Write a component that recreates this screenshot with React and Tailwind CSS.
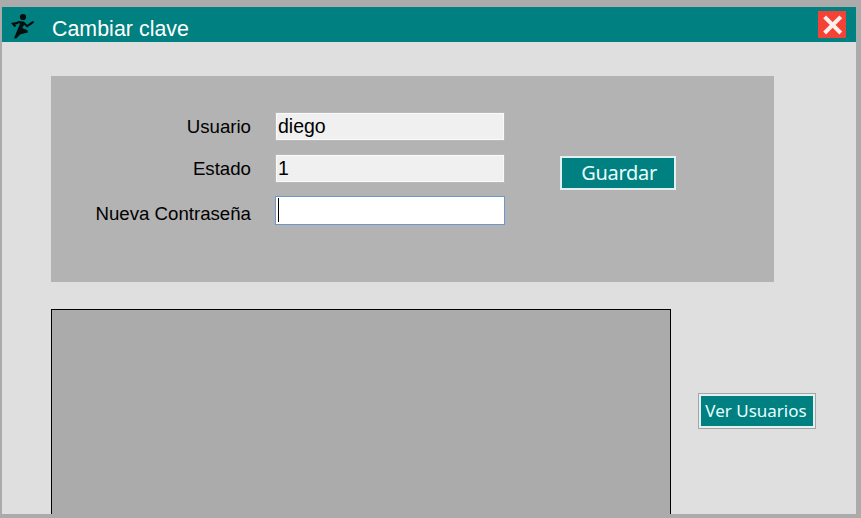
import React from "react";

const inputBase =
  "block w-[230px] px-[2px] text-[19.5px] text-black outline-none rounded-none";

function Runner() {
  return (
    <svg className="block h-[29px] w-[24px]" viewBox="0 0 24 29" fill="none" stroke="#04100f">
      <circle cx="13" cy="7" r="3.1" fill="#04100f" stroke="none" />
      <path d="M8 11.2 L13.8 11.6 L14.8 14 L12.2 18 L17.5 20.2 L17.8 22.6 L10.5 24.2 L6.2 28.5 L4 28.3 L7.2 20.5 L9.8 14 Z" fill="#04100f" stroke="none" />
      <path d="M10.5 12 L7.5 12.2 M8 12.8 L3 13.8 L5.4 16.6" strokeWidth="2.2" />
      <path d="M13.6 12.8 L17.2 16.2 L22.9 12.2" strokeWidth="2.2" strokeLinecap="round" />
    </svg>
  );
}

function TitleBar() {
  return (
    <header className="flex h-[35px] shrink-0 items-center bg-[#008080] pl-[8px] pr-[10px]">
      <Runner />
      <h1 className="ml-[18px] mt-[8px] whitespace-nowrap text-[21.33px] leading-[26px] font-normal tracking-[0.05px] text-white">
        Cambiar clave
      </h1>
      <button aria-label="Cerrar" className="ml-auto flex h-[27px] w-[28px] items-center justify-center bg-[#f44336]">
        <svg className="block h-[27px] w-[28px]" viewBox="0 0 28 27" fill="none" stroke="#fff0ee" strokeWidth="4">
          <path d="M6.6 5.8 L22.8 22 M22.8 5.8 L6.6 22" />
        </svg>
      </button>
    </header>
  );
}

function Field({ label, value, className, labelClass }) {
  return (
    <label className="flex items-start">
      <span className={"w-[200px] shrink-0 text-right text-[18.67px] leading-[22px] whitespace-nowrap " + labelClass}>
        {label}
      </span>
      <span className="ml-[24px]">
        <input readOnly value={value} className={inputBase + " " + className} />
      </span>
    </label>
  );
}

export default function App() {
  return (
    <div className="flex h-[518px] w-[861px] overflow-hidden bg-[#ababab] pt-[7px] pl-[2px] font-['Liberation_Sans',Arial,sans-serif]">
      <main className="flex h-[507px] w-[854px] flex-col bg-[#dfdfdf]">
        <TitleBar />
        <section className="mt-[34px] ml-[49px] flex h-[206px] w-[723px] shrink-0 bg-[#b3b3b3] pt-[36px]">
          <div className="flex flex-col">
            <Field
              label="Usuario"
              value="diego"
              labelClass="pt-[4px]"
              className="h-[29px] border border-[#b9b9b9] bg-[#f0f0f0] shadow-[inset_0_0_0_1px_#fafafa]"
            />
            <div className="h-[13px]" />
            <Field
              label="Estado"
              value="1"
              labelClass="pt-[4px]"
              className="h-[29px] border border-[#b9b9b9] bg-[#f0f0f0] shadow-[inset_0_0_0_1px_#fafafa]"
            />
            <div className="h-[13px]" />
            <div className="flex items-start">
              <span className="w-[200px] shrink-0 whitespace-nowrap pt-[7px] text-right text-[18.67px] leading-[22px]">
                Nueva Contraseña
              </span>
              <div className="ml-[24px] flex h-[29px] w-[230px] items-start border border-[#6f97c9] bg-white pt-[1px] pl-[2px]">
                <span className="h-[24px] w-px bg-black" />
              </div>
            </div>
          </div>
          <button className="mt-[44px] ml-[55px] flex h-[34px] w-[116px] items-center justify-center border-2 border-[#e4f0f0] bg-[#008080] pl-[2px] font-['Noto_Sans',sans-serif] text-[20px] leading-[30px] tracking-[-0.3px] text-[#e8ffff]">
            Guardar
          </button>
        </section>
        <div className="mt-[27px] ml-[49px] flex h-[205px] items-start">
          <div className="h-[205px] w-[620px] border-x border-t border-black bg-[#ababab]" />
          <div className="mt-[84px] ml-[27px] border border-[#a5a5a5]">
            <button className="flex h-[34px] w-[116px] items-center justify-center whitespace-nowrap border-2 border-[#e4f0f0] bg-[#008080] pr-[2px] font-['Noto_Sans',sans-serif] text-[17px] leading-[30px] text-[#e8ffff]">
              Ver Usuarios
            </button>
          </div>
        </div>
      </main>
    </div>
  );
}
